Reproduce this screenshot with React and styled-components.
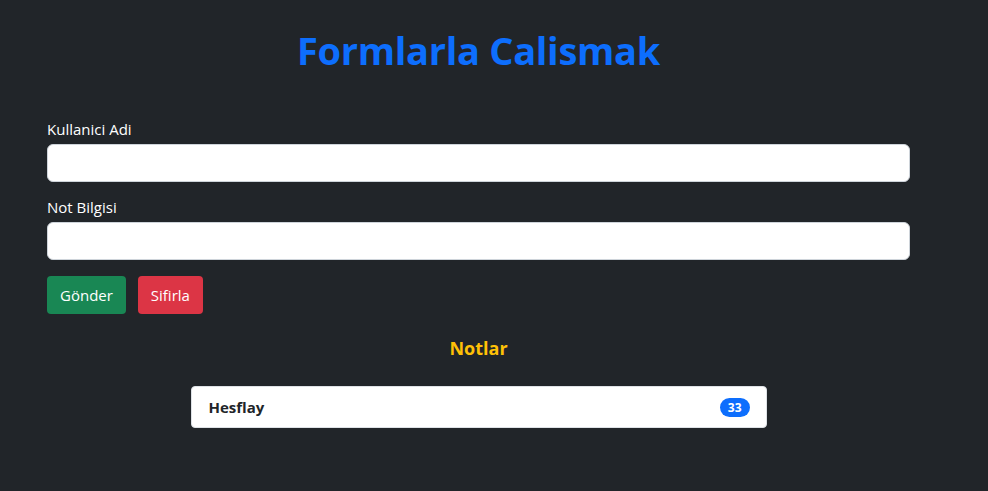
import React from "react";
import styled, { createGlobalStyle } from "styled-components";

const Global = createGlobalStyle`
  html, body { margin: 0; padding: 0; background: #212529; }
  body {
    font-family: "Open Sans", "Noto Sans", sans-serif;
    color: #dee2e6;
    min-height: 491px;
  }
  * { box-sizing: border-box; }
`;

const Page = styled.div`
  width: 863px;
  margin-left: 47px;
  padding-top: 25px;
`;

const Title = styled.h1`
  margin: 0 0 43px;
  text-align: center;
  color: #0d6efd;
  font-size: 38px;
  font-weight: 700;
  line-height: 50px;
  letter-spacing: -0.3px;
`;

const Form = styled.form`
  display: flex;
  flex-direction: column;
`;

const Field = styled.div`
  display: flex;
  flex-direction: column;
  margin-bottom: 14px;
`;

const Label = styled.label`
  color: #fff;
  font-size: 15px;
  line-height: 22px;
  margin-bottom: 4px;
`;

const Input = styled.input`
  height: 38px;
  width: 100%;
  border: 1px solid #ced4da;
  border-radius: 6px;
  background: #fff;
  font-size: 16px;
  padding: 6px 12px;
`;

const Buttons = styled.div`
  display: flex;
  gap: 12px;
  margin-top: 2px;
`;

const Button = styled.button`
  height: 38px;
  padding: 0 13px;
  border: none;
  border-radius: 4px;
  color: #fff;
  font-family: inherit;
  font-size: 15px;
  background: ${(p) => (p.$variant === "danger" ? "#dc3545" : "#198754")};
`;

const Notes = styled.section`
  display: flex;
  flex-direction: column;
  align-items: center;
  margin-top: 19px;
`;

const NotesTitle = styled.h5`
  margin: 0 0 23px;
  color: #ffc107;
  font-size: 18px;
  font-weight: 700;
  line-height: 30px;
`;

const List = styled.ul`
  list-style: none;
  margin: 0;
  padding: 0;
  width: 576px;
`;

const Item = styled.li`
  height: 42px;
  display: flex;
  align-items: center;
  justify-content: space-between;
  padding: 0 16px 0 17px;
  background: #fff;
  border: 1px solid #dee2e6;
  border-radius: 4px;
  color: #212529;
  font-weight: 700;
  font-size: 15px;
`;

const Badge = styled.span`
  background: #0d6efd;
  color: #fff;
  border-radius: 10px;
  font-size: 12px;
  font-weight: 700;
  line-height: 19px;
  height: 19px;
  padding: 0 8px;
`;

export default function App() {
  return (
    <>
      <Global />
      <Page>
        <Title>Formlarla Calismak</Title>
        <Form onSubmit={(e) => e.preventDefault()}>
          <Field>
            <Label>Kullanici Adi</Label>
            <Input type="text" />
          </Field>
          <Field>
            <Label>Not Bilgisi</Label>
            <Input type="text" />
          </Field>
          <Buttons>
            <Button type="submit">Gönder</Button>
            <Button type="reset" $variant="danger">Sifirla</Button>
          </Buttons>
        </Form>
        <Notes>
          <NotesTitle>Notlar</NotesTitle>
          <List>
            <Item>
              Hesflay
              <Badge>33</Badge>
            </Item>
          </List>
        </Notes>
      </Page>
    </>
  );
}
